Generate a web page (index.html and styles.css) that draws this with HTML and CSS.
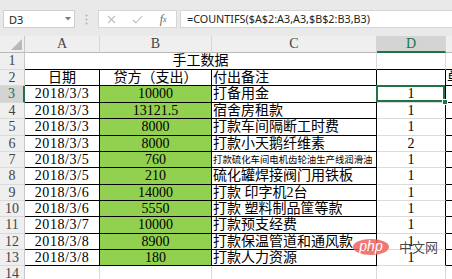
FILE: index.html
```html
<!DOCTYPE html>
<html lang="zh">
<head>
<meta charset="utf-8">
<link rel="stylesheet" href="styles.css">
</head>
<body>
<div class="toolbar">
  <div class="namebox"><span>D3</span><svg class="caret" width="6" height="4" viewBox="0 0 6 4"><path d="M0 0H6L3 3.5Z" fill="#7a7a7a"/></svg></div>
  <div class="sep"><svg width="3" height="11" viewBox="0 0 3 11"><circle cx="1.5" cy="1.5" r="1" fill="#b0b0b0"/><circle cx="1.5" cy="5.5" r="1" fill="#b0b0b0"/><circle cx="1.5" cy="9.5" r="1" fill="#b0b0b0"/></svg></div>
  <div class="fxbtns">
    <span class="ic"><svg width="9" height="9" viewBox="0 0 9 9"><path d="M1 1L8 8M8 1L1 8" stroke="#bdbdbd" stroke-width="1.1" fill="none"/></svg></span>
    <span class="ic"><svg width="11" height="9" viewBox="0 0 11 9"><path d="M1 5L4 8L10 1" stroke="#bdbdbd" stroke-width="1.1" fill="none"/></svg></span>
    <span class="ic fx"><i>f</i><sub>x</sub></span>
  </div>
  <div class="formula">=COUNTIFS($A$2:A3,A3,$B$2:B3,B3)</div>
</div>
<div class="sheet">
  <div class="hd corner"><svg width="11" height="11" viewBox="0 0 11 11"><path d="M11 0V11H0Z" fill="#b8b8b8"/></svg></div>
  <div class="hd col">A</div>
  <div class="hd col">B</div>
  <div class="hd col">C</div>
  <div class="hd col selh">D</div>
  <div class="hd col">E</div>

  <div class="hd row">1</div>
  <div class="c merge bb ctr">手工数据</div>
  <div class="c bb"></div>
  <div class="c bb"></div>

  <div class="hd row">2</div>
  <div class="c k ctr">日期</div>
  <div class="c k ctr">贷方（支出）</div>
  <div class="c k">付出备注</div>
  <div class="c k"></div>
  <div class="c k">单</div>

  <div class="hd row selr">3</div>
  <div class="c k ctr dt">2018/3/3</div>
  <div class="c k g ctr">10000</div>
  <div class="c k">打备用金</div>
  <div class="c kr ctr sel">1</div>
  <div class="c k"></div>

  <div class="hd row">4</div>
  <div class="c k ctr dt">2018/3/3</div>
  <div class="c k g ctr">13121.5</div>
  <div class="c k">宿舍房租款</div>
  <div class="c kr ctr">1</div>
  <div class="c k"></div>

  <div class="hd row">5</div>
  <div class="c k ctr dt">2018/3/3</div>
  <div class="c k g ctr">8000</div>
  <div class="c k">打款车间隔断工时费</div>
  <div class="c kr ctr">1</div>
  <div class="c k"></div>

  <div class="hd row">6</div>
  <div class="c k ctr dt">2018/3/3</div>
  <div class="c k g ctr">8000</div>
  <div class="c k">打款小天鹅纤维素</div>
  <div class="c kr ctr">2</div>
  <div class="c k"></div>

  <div class="hd row">7</div>
  <div class="c k ctr dt">2018/3/5</div>
  <div class="c k g ctr">760</div>
  <div class="c k small">打款硫化车间电机齿轮油生产线润滑油</div>
  <div class="c kr ctr">1</div>
  <div class="c k"></div>

  <div class="hd row">8</div>
  <div class="c k ctr dt">2018/3/5</div>
  <div class="c k g ctr">210</div>
  <div class="c k">硫化罐焊接阀门用铁板</div>
  <div class="c kr ctr">1</div>
  <div class="c k"></div>

  <div class="hd row">9</div>
  <div class="c k ctr dt">2018/3/6</div>
  <div class="c k g ctr">14000</div>
  <div class="c k">打款 印字机2台</div>
  <div class="c kr ctr">1</div>
  <div class="c k"></div>

  <div class="hd row">10</div>
  <div class="c k ctr dt">2018/3/6</div>
  <div class="c k g ctr">5550</div>
  <div class="c k">打款 塑料制品筐等款</div>
  <div class="c kr ctr">1</div>
  <div class="c k"></div>

  <div class="hd row">11</div>
  <div class="c k ctr dt">2018/3/7</div>
  <div class="c k g ctr">10000</div>
  <div class="c k">打款预支经费</div>
  <div class="c kr ctr">1</div>
  <div class="c k"></div>

  <div class="hd row">12</div>
  <div class="c k ctr dt">2018/3/8</div>
  <div class="c k g ctr">8900</div>
  <div class="c k">打款保温管道和通风款</div>
  <div class="c kr ctr">1</div>
  <div class="c k"></div>

  <div class="hd row">13</div>
  <div class="c k ctr dt">2018/3/8</div>
  <div class="c k g ctr">180</div>
  <div class="c k">打款人力资源</div>
  <div class="c kr ctr">1</div>
  <div class="c k"></div>

  <div class="hd row">14</div>
  <div class="c"></div>
  <div class="c"></div>
  <div class="c"></div>
  <div class="c"></div>
  <div class="c"></div>
</div>
<div class="wm"><span class="php">php</span><span class="cn">中文网</span></div>
</body>
</html>
```
FILE: styles.css
```css
html, body {
  margin: 0;
  padding: 0;
}
body {
  width: 452px;
  height: 279px;
  overflow: hidden;
  position: relative;
  background: #ffffff;
  font-family: "Liberation Serif", "Noto Sans CJK SC", serif;
  color: #000;
}
.toolbar {
  height: 36px;
  box-sizing: border-box;
  background: #e9e9e9;
  display: flex;
  align-items: flex-start;
  padding: 10px 0 0 3px;
}
.namebox {
  width: 72px;
  height: 18px;
  box-sizing: border-box;
  background: #fff;
  border: 1px solid #cfcfcf;
  display: flex;
  align-items: center;
  justify-content: space-between;
  padding: 0 3px 0 5px;
  font: 11px "Noto Sans", sans-serif;
  color: #222;
}
.sep {
  width: 23px;
  height: 18px;
  display: flex;
  align-items: center;
  justify-content: center;
}
.fxbtns {
  width: 79px;
  height: 18px;
  box-sizing: border-box;
  background: #fff;
  border: 1px solid #d6d6d6;
  display: flex;
}
.ic {
  width: 26px;
  display: flex;
  align-items: center;
  justify-content: center;
}
.fx {
  font: italic 12px "Liberation Serif", serif;
  color: #666;
}
.fx sub {
  font-size: 8px;
  vertical-align: -1px;
}
.formula {
  flex: 1;
  margin-left: 3px;
  height: 18px;
  box-sizing: border-box;
  background: #fff;
  border: 1px solid #d6d6d6;
  border-right: none;
  padding-left: 6px;
  font: 10.8px "Noto Sans", sans-serif;
  line-height: 16px;
  color: #222;
  white-space: nowrap;
}
.sheet {
  display: grid;
  grid-template-columns: 25px 75px 112px 165px 69px 90px;
  grid-template-rows: 17px 17px 16px 17px 16px 17px 16px 16px 17px 16px 16px 17px 16px 16px 17px;
}
.hd {
  background: #efefef;
  color: #444;
  box-sizing: border-box;
  font-size: 14px;
  display: flex;
  align-items: center;
  justify-content: center;
  overflow: hidden;
}
.corner {
  border-right: 1px solid #c8c8c8;
  border-bottom: 1px solid #b8b8b8;
  justify-content: flex-end;
  align-items: flex-end;
  padding: 0 2px 2px 0;
}
.col {
  border-right: 1px solid #d6d6d6;
  border-bottom: 1px solid #b8b8b8;
}
.row {
  border-right: 1px solid #c8c8c8;
  border-bottom: 1px solid #dadada;
}
.selh {
  background: #d4d4d4;
  color: #217346;
  border-bottom: 2px solid #217346;
}
.selr {
  background: #d4d4d4;
  color: #217346;
  border-right: 2px solid #217346;
}
.c {
  box-sizing: border-box;
  border-right: 1px solid #dadada;
  border-bottom: 1px solid #dadada;
  display: flex;
  align-items: center;
  overflow: hidden;
  white-space: nowrap;
  font-size: 14px;
  line-height: 16px;
  padding-left: 1px;
}
.merge {
  grid-column: span 3;
}
.ctr {
  justify-content: center;
  padding-left: 0;
}
.dt {
  letter-spacing: 0.6px;
}
.bb {
  border-bottom-color: #000;
}
.k {
  border-color: #000;
}
.kr {
  border-right-color: #000;
}
.g {
  background: #92d050;
}
.small {
  font-size: 9.4px;
}
.sel {
  position: relative;
  overflow: visible;
}
.sel::before {
  content: "";
  position: absolute;
  left: -1px;
  top: -1px;
  right: 0;
  bottom: 0;
  border: 2px solid #217346;
}
.sel::after {
  content: "";
  position: absolute;
  right: -3px;
  bottom: -3px;
  width: 4px;
  height: 4px;
  background: #217346;
  border: 1px solid #fff;
}
.wm {
  position: absolute;
  left: 353px;
  top: 237px;
  display: flex;
  align-items: center;
  gap: 10px;
}
.php {
  width: 36px;
  height: 16px;
  border-radius: 50%;
  background: rgba(236, 98, 94, 0.85);
  color: #fff;
  font: italic 14px "Liberation Sans", sans-serif;
  line-height: 15px;
  text-align: center;
}
.cn {
  font: 13px "Noto Sans CJK SC", sans-serif;
  color: rgba(40, 40, 40, 0.85);
}
```
